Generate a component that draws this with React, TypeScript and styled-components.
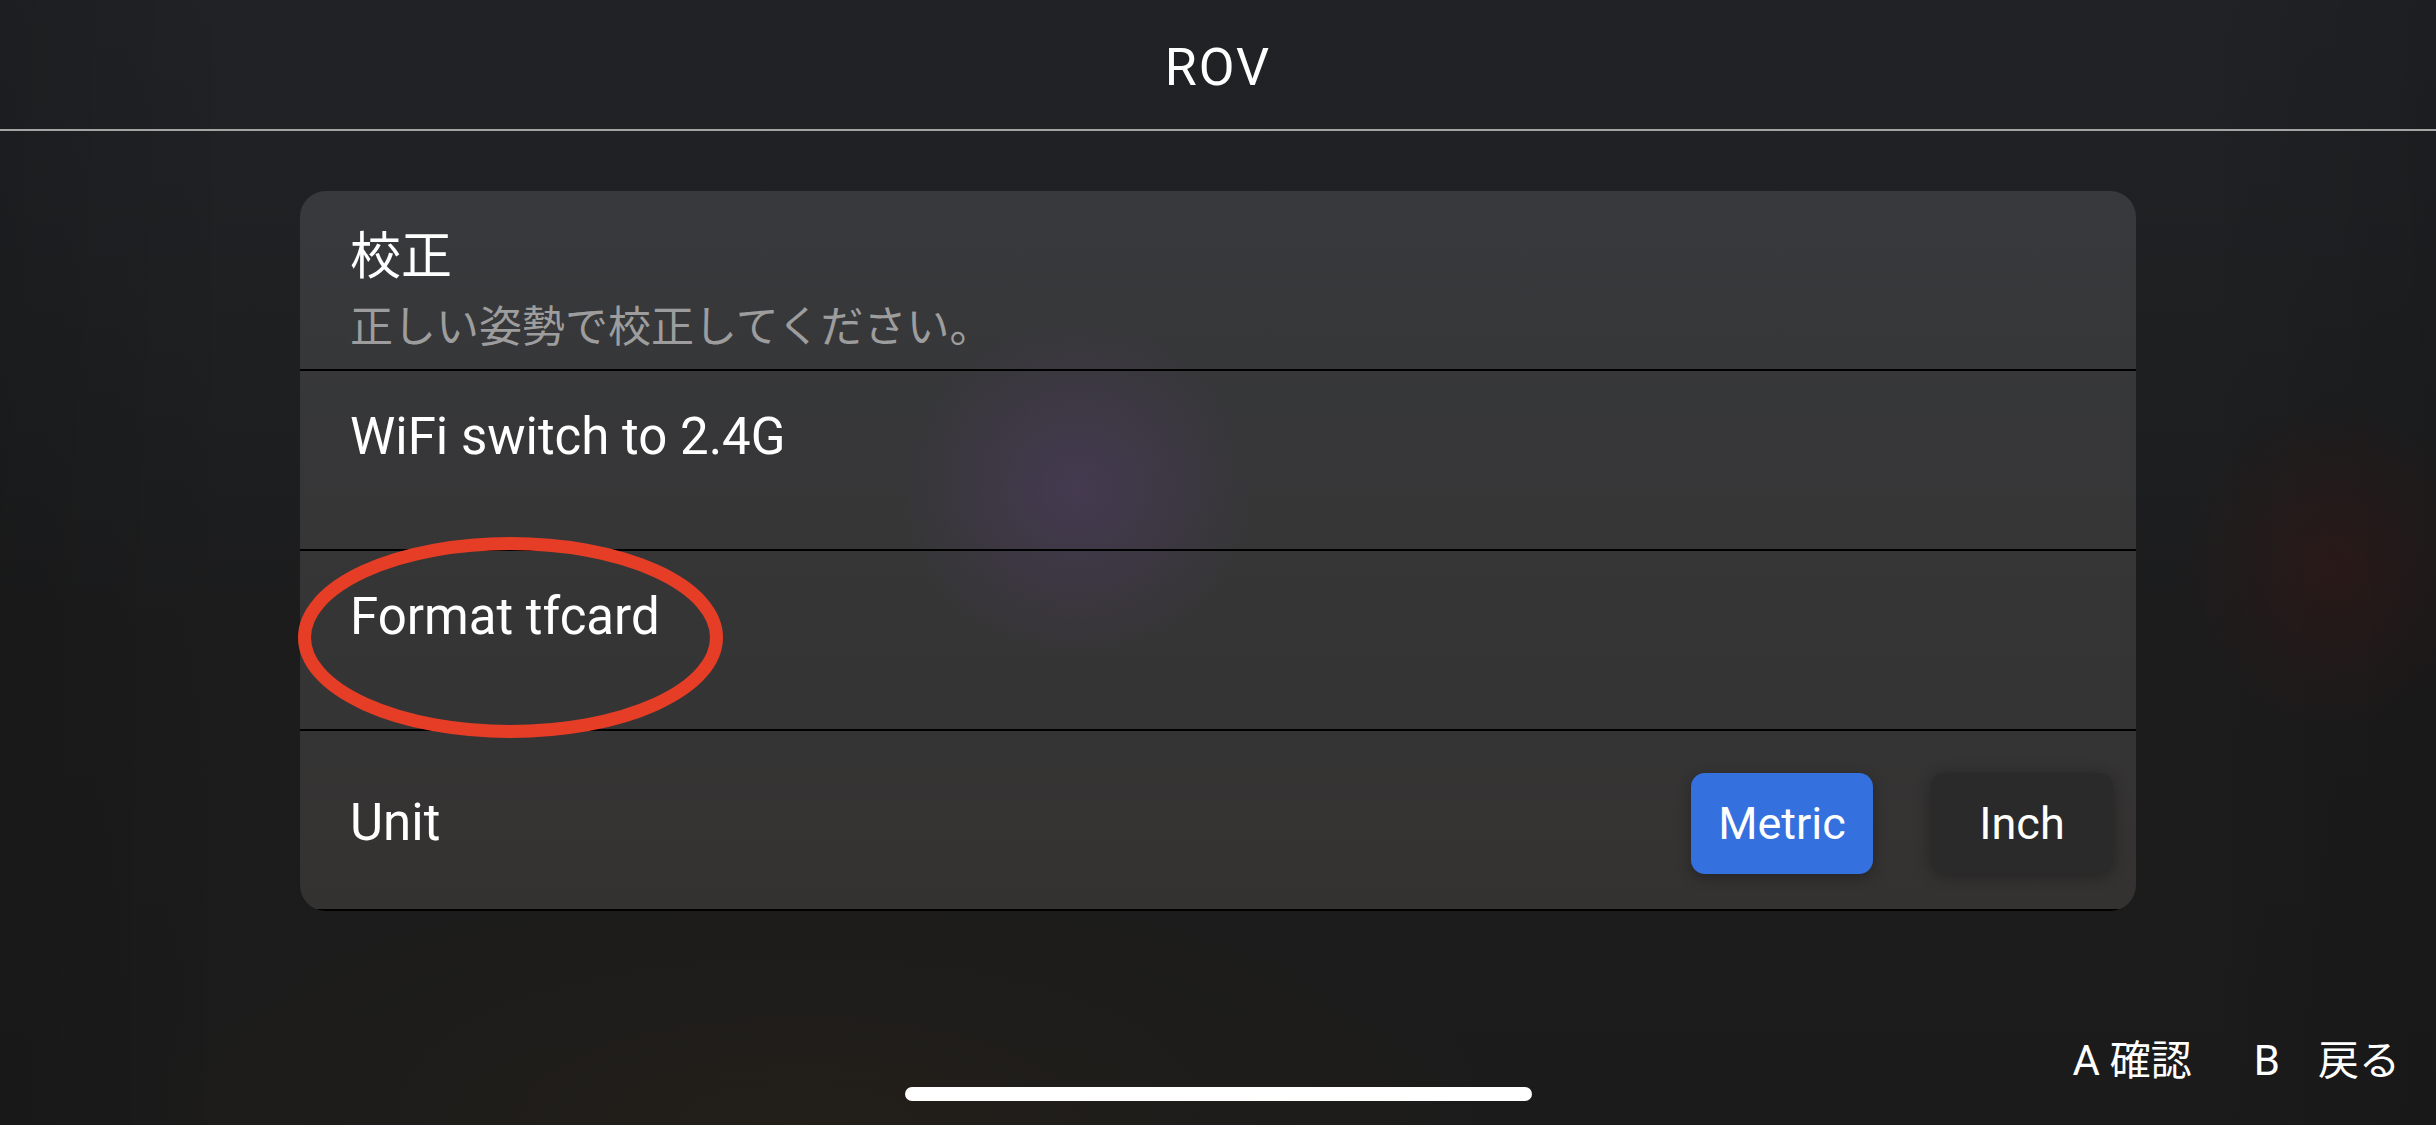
import React from "react";
import styled, { createGlobalStyle } from "styled-components";

const GlobalStyle = createGlobalStyle`
  html, body {
    margin: 0;
    padding: 0;
    background: #1b1b1b;
  }
  body {
    font-family: Roboto, "Noto Sans CJK JP", "Noto Sans", sans-serif;
    color: #ffffff;
  }
  * { box-sizing: border-box; }
`;

const Page = styled.div`
  position: relative;
  width: 2436px;
  height: 1125px;
  overflow: hidden;
  display: flex;
  flex-direction: column;
  background:
    radial-gradient(ellipse 150px 170px at 2333px 567px, rgba(72, 22, 16, 0.32), rgba(72, 22, 16, 0) 100%),
    radial-gradient(ellipse 700px 260px at 800px 1125px, rgba(48, 38, 22, 0.35), rgba(48, 38, 22, 0) 100%),
    linear-gradient(90deg, rgba(0, 0, 0, 0.12) 0%, rgba(0, 0, 0, 0) 10%, rgba(0, 0, 0, 0) 90%, rgba(0, 0, 0, 0.12) 100%),
    linear-gradient(180deg, #202225 0%, #1e2022 25%, #1c1c1d 55%, #1b1b1b 100%);
`;

const Header = styled.header`
  height: 131px;
  padding-top: 5px;
  border-bottom: 2px solid #a4a4a4;
  display: flex;
  align-items: center;
  justify-content: center;
`;

const HeaderTitle = styled.h1`
  margin: 0;
  font-family: Roboto, sans-serif;
  font-weight: 400;
  font-size: 52px;
  letter-spacing: 2px;
  color: #ffffff;
`;

const Main = styled.main`
  padding-top: 60px;
  display: flex;
  justify-content: center;
`;

const CardWrap = styled.div`
  position: relative;
  width: 1836px;
`;

const Card = styled.section`
  width: 100%;
  border-radius: 26px;
  overflow: hidden;
  background:
    radial-gradient(ellipse 175px 165px at 777px 299px, rgba(92, 64, 122, 0.38), rgba(92, 64, 122, 0) 100%),
    linear-gradient(180deg, #38393c 0%, #363637 45%, #353434 75%, #343231 100%);
`;

const SettingRow = styled.div<{ $variant: "stack" | "inline" }>`
  height: 180px;
  border-bottom: 2px solid #000000;
  display: flex;
  padding: ${(p) => (p.$variant === "stack" ? "30px 50px 0 50px" : "6px 23px 0 50px")};
  flex-direction: ${(p) => (p.$variant === "stack" ? "column" : "row")};
  align-items: ${(p) => (p.$variant === "stack" ? "flex-start" : "center")};
  justify-content: ${(p) => (p.$variant === "stack" ? "flex-start" : "space-between")};
`;

const RowTitle = styled.div`
  font-family: Roboto, "Noto Sans CJK JP", sans-serif;
  font-size: 51px;
  line-height: 72px;
  color: #ffffff;
`;

const RowSubtitle = styled.div`
  font-family: "Noto Sans CJK JP", Roboto, sans-serif;
  font-size: 43px;
  line-height: 60px;
  color: #9d9d9e;
`;

const SegmentGroup = styled.div`
  display: flex;
  align-items: center;
  gap: 58px;
`;

const SegmentButton = styled.button<{ $active?: boolean }>`
  width: 182px;
  height: 101px;
  border: none;
  border-radius: 14px;
  font-family: Roboto, sans-serif;
  font-size: 45px;
  color: #ffffff;
  background: ${(p) => (p.$active ? "#3470de" : "#2a2a2a")};
  box-shadow: ${(p) =>
    p.$active ? "0 4px 14px rgba(0, 0, 0, 0.28)" : "0 2px 16px rgba(0, 0, 0, 0.32)"};
  display: flex;
  align-items: center;
  justify-content: center;
  padding: 0;
`;

const Annotation = styled.svg`
  position: absolute;
  left: -2px;
  top: 346px;
  pointer-events: none;
`;

const Footer = styled.footer`
  margin-top: auto;
  height: 132px;
  padding: 40px 36px 0 0;
  display: flex;
  justify-content: flex-end;
  align-items: flex-start;
  gap: 62px;
`;

const Hint = styled.div<{ $gap: number }>`
  display: flex;
  align-items: baseline;
  gap: ${(p) => p.$gap}px;
  line-height: 48px;
`;

const HintKey = styled.span`
  font-family: Roboto, sans-serif;
  font-size: 42px;
  color: #ffffff;
`;

const HintLabel = styled.span`
  font-family: "Noto Sans CJK JP", sans-serif;
  font-size: 41px;
  color: #ffffff;
`;

const HomeIndicator = styled.div`
  position: absolute;
  left: 905px;
  bottom: 24px;
  width: 627px;
  height: 14px;
  border-radius: 7px;
  background: #ffffff;
`;

export default function App() {
  return (
    <>
      <GlobalStyle />
      <Page>
        <Header>
          <HeaderTitle>ROV</HeaderTitle>
        </Header>
        <Main>
          <CardWrap>
            <Card>
              <SettingRow $variant="stack">
                <RowTitle>校正</RowTitle>
                <RowSubtitle>正しい姿勢で校正してください。</RowSubtitle>
              </SettingRow>
              <SettingRow $variant="stack">
                <RowTitle>WiFi switch to 2.4G</RowTitle>
              </SettingRow>
              <SettingRow $variant="stack">
                <RowTitle>Format tfcard</RowTitle>
              </SettingRow>
              <SettingRow $variant="inline">
                <RowTitle>Unit</RowTitle>
                <SegmentGroup>
                  <SegmentButton $active>Metric</SegmentButton>
                  <SegmentButton>Inch</SegmentButton>
                </SegmentGroup>
              </SettingRow>
            </Card>
            <Annotation width="425" height="201" viewBox="0 0 425 201">
              <ellipse cx="212.5" cy="100.5" rx="206" ry="94" fill="none" stroke="#e63e26" strokeWidth="13" />
            </Annotation>
          </CardWrap>
        </Main>
        <Footer>
          <Hint $gap={10}>
            <HintKey>A</HintKey>
            <HintLabel>確認</HintLabel>
          </Hint>
          <Hint $gap={38}>
            <HintKey>B</HintKey>
            <HintLabel>戻る</HintLabel>
          </Hint>
        </Footer>
        <HomeIndicator />
      </Page>
    </>
  );
}
